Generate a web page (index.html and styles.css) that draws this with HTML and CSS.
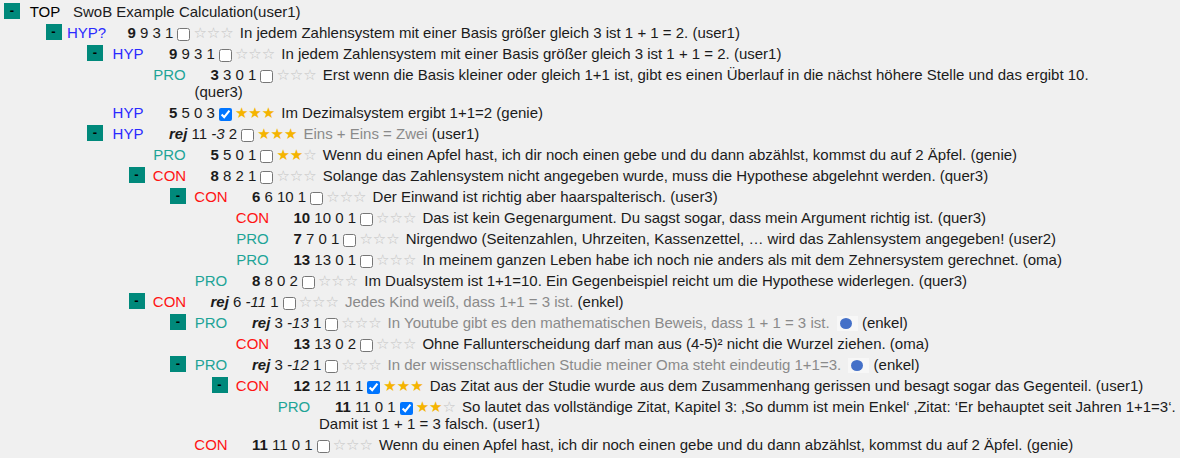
FILE: index.html
```html
<!DOCTYPE html>
<html lang="de">
<head>
<meta charset="utf-8">
<title>SwoB Example Calculation</title>
<link rel="stylesheet" href="styles.css">
</head>
<body>
<div class="tree">
  <div class="node">
    <div class="row">
      <button class="tog">-</button>
      <span class="lbl">TOP</span>
      <div class="txt txt-top">SwoB Example Calculation(user1)</div>
    </div>
    <div class="kids">
      <div class="node">
        <div class="row">
          <button class="tog">-</button>
          <span class="lbl hyp">HYP?</span>
          <div class="txt"><b>9</b> 9 3 1<input class="cb" type="checkbox"><span class="stars"><span class="off">☆☆☆</span></span>In jedem Zahlensystem mit einer Basis größer gleich 3 ist 1 + 1 = 2. (user1)</div>
        </div>
        <div class="kids">
          <div class="node">
            <div class="row">
              <button class="tog">-</button>
              <span class="lbl hyp">HYP</span>
              <div class="txt"><b>9</b> 9 3 1<input class="cb" type="checkbox"><span class="stars"><span class="off">☆☆☆</span></span>In jedem Zahlensystem mit einer Basis größer gleich 3 ist 1 + 1 = 2. (user1)</div>
            </div>
            <div class="kids">
              <div class="node">
                <div class="row">
                  <span class="tog-sp"></span>
                  <span class="lbl pro">PRO</span>
                  <div class="txt"><b>3</b> 3 0 1<input class="cb" type="checkbox"><span class="stars"><span class="off">☆☆☆</span></span>Erst wenn die Basis kleiner oder gleich 1+1 ist, gibt es einen Überlauf in die nächst höhere Stelle und das ergibt 10. (quer3)</div>
                </div>
              </div>
            </div>
          </div>
          <div class="node">
            <div class="row">
              <span class="tog-sp"></span>
              <span class="lbl hyp">HYP</span>
              <div class="txt"><b>5</b> 5 0 3<input class="cb" type="checkbox" checked><span class="stars"><span class="on">★★★</span></span>Im Dezimalsystem ergibt 1+1=2 (genie)</div>
            </div>
          </div>
          <div class="node">
            <div class="row">
              <button class="tog">-</button>
              <span class="lbl hyp">HYP</span>
              <div class="txt"><b><i>rej</i></b> 11 <i>-3</i> 2<input class="cb" type="checkbox"><span class="stars"><span class="on">★★★</span></span><span class="rej">Eins + Eins = Zwei</span> (user1)</div>
            </div>
            <div class="kids">
              <div class="node">
                <div class="row">
                  <span class="tog-sp"></span>
                  <span class="lbl pro">PRO</span>
                  <div class="txt"><b>5</b> 5 0 1<input class="cb" type="checkbox"><span class="stars"><span class="on">★★</span><span class="off">☆</span></span>Wenn du einen Apfel hast, ich dir noch einen gebe und du dann abzählst, kommst du auf 2 Äpfel. (genie)</div>
                </div>
              </div>
              <div class="node">
                <div class="row">
                  <button class="tog">-</button>
                  <span class="lbl con">CON</span>
                  <div class="txt"><b>8</b> 8 2 1<input class="cb" type="checkbox"><span class="stars"><span class="off">☆☆☆</span></span>Solange das Zahlensystem nicht angegeben wurde, muss die Hypothese abgelehnt werden. (quer3)</div>
                </div>
                <div class="kids">
                  <div class="node">
                    <div class="row">
                      <button class="tog">-</button>
                      <span class="lbl con">CON</span>
                      <div class="txt"><b>6</b> 6 10 1<input class="cb" type="checkbox"><span class="stars"><span class="off">☆☆☆</span></span>Der Einwand ist richtig aber haarspalterisch. (user3)</div>
                    </div>
                    <div class="kids">
                      <div class="node">
                        <div class="row">
                          <span class="tog-sp"></span>
                          <span class="lbl con">CON</span>
                          <div class="txt"><b>10</b> 10 0 1<input class="cb" type="checkbox"><span class="stars"><span class="off">☆☆☆</span></span>Das ist kein Gegenargument. Du sagst sogar, dass mein Argument richtig ist. (quer3)</div>
                        </div>
                      </div>
                      <div class="node">
                        <div class="row">
                          <span class="tog-sp"></span>
                          <span class="lbl pro">PRO</span>
                          <div class="txt"><b>7</b> 7 0 1<input class="cb" type="checkbox"><span class="stars"><span class="off">☆☆☆</span></span>Nirgendwo (Seitenzahlen, Uhrzeiten, Kassenzettel, … wird das Zahlensystem angegeben! (user2)</div>
                        </div>
                      </div>
                      <div class="node">
                        <div class="row">
                          <span class="tog-sp"></span>
                          <span class="lbl pro">PRO</span>
                          <div class="txt"><b>13</b> 13 0 1<input class="cb" type="checkbox"><span class="stars"><span class="off">☆☆☆</span></span>In meinem ganzen Leben habe ich noch nie anders als mit dem Zehnersystem gerechnet. (oma)</div>
                        </div>
                      </div>
                    </div>
                  </div>
                  <div class="node">
                    <div class="row">
                      <span class="tog-sp"></span>
                      <span class="lbl pro">PRO</span>
                      <div class="txt"><b>8</b> 8 0 2<input class="cb" type="checkbox"><span class="stars"><span class="off">☆☆☆</span></span>Im Dualsystem ist 1+1=10. Ein Gegenbeispiel reicht um die Hypothese widerlegen. (quer3)</div>
                    </div>
                  </div>
                </div>
              </div>
              <div class="node">
                <div class="row">
                  <button class="tog">-</button>
                  <span class="lbl con">CON</span>
                  <div class="txt"><b><i>rej</i></b> 6 <i>-11</i> 1<input class="cb" type="checkbox"><span class="stars"><span class="off">☆☆☆</span></span><span class="rej">Jedes Kind weiß, dass 1+1 = 3 ist.</span> (enkel)</div>
                </div>
                <div class="kids">
                  <div class="node">
                    <div class="row">
                      <button class="tog">-</button>
                      <span class="lbl pro">PRO</span>
                      <div class="txt"><b><i>rej</i></b> 3 <i>-13</i> 1<input class="cb" type="checkbox"><span class="stars"><span class="off">☆☆☆</span></span><span class="rej">In Youtube gibt es den mathematischen Beweis, dass 1 + 1 = 3 ist.</span> <span class="ref"><span class="dot"></span></span> (enkel)</div>
                    </div>
                    <div class="kids">
                      <div class="node">
                        <div class="row">
                          <span class="tog-sp"></span>
                          <span class="lbl con">CON</span>
                          <div class="txt"><b>13</b> 13 0 2<input class="cb" type="checkbox"><span class="stars"><span class="off">☆☆☆</span></span>Ohne Fallunterscheidung darf man aus (4-5)² nicht die Wurzel ziehen. (oma)</div>
                        </div>
                      </div>
                    </div>
                  </div>
                  <div class="node">
                    <div class="row">
                      <button class="tog">-</button>
                      <span class="lbl pro">PRO</span>
                      <div class="txt"><b><i>rej</i></b> 3 <i>-12</i> 1<input class="cb" type="checkbox"><span class="stars"><span class="off">☆☆☆</span></span><span class="rej">In der wissenschaftlichen Studie meiner Oma steht eindeutig 1+1=3.</span> <span class="ref"><span class="dot"></span></span> (enkel)</div>
                    </div>
                    <div class="kids">
                      <div class="node">
                        <div class="row">
                          <button class="tog">-</button>
                          <span class="lbl con">CON</span>
                          <div class="txt"><b>12</b> 12 11 1<input class="cb" type="checkbox" checked><span class="stars"><span class="on">★★★</span></span>Das Zitat aus der Studie wurde aus dem Zusammenhang gerissen und besagt sogar das Gegenteil. (user1)</div>
                        </div>
                        <div class="kids">
                          <div class="node">
                            <div class="row">
                              <span class="tog-sp"></span>
                              <span class="lbl pro">PRO</span>
                              <div class="txt"><b>11</b> 11 0 1<input class="cb" type="checkbox" checked><span class="stars"><span class="on">★★</span><span class="off">☆</span></span>So lautet das vollständige Zitat, Kapitel 3: ‚So dumm ist mein Enkel‘ ‚Zitat: ‘Er behauptet seit Jahren 1+1=3‘. Damit ist 1 + 1 = 3 falsch. (user1)</div>
                            </div>
                          </div>
                        </div>
                      </div>
                    </div>
                  </div>
                  <div class="node">
                    <div class="row">
                      <span class="tog-sp"></span>
                      <span class="lbl con">CON</span>
                      <div class="txt"><b>11</b> 11 0 1<input class="cb" type="checkbox"><span class="stars"><span class="off">☆☆☆</span></span>Wenn du einen Apfel hast, ich dir noch einen gebe und du dann abzählst, kommst du auf 2 Äpfel. (genie)</div>
                    </div>
                  </div>
                </div>
              </div>
            </div>
          </div>
        </div>
      </div>
    </div>
  </div>
</div>
</body>
</html>
```

FILE: styles.css
```css
html, body {
  margin: 0;
  padding: 0;
  background: #f0f0f0;
  overflow: hidden;
}

body {
  font-family: "Liberation Sans", Arial, sans-serif;
  font-size: 15px;
  line-height: 17px;
  color: #1b1b1b;
}

.tree {
  width: 976px;
  padding: 1px 0 0 4px;
}

.kids {
  margin-left: 41.5px;
  margin-right: -38px;
}

.row {
  display: flex;
  align-items: flex-start;
  padding: 2px 0;
}

.tog {
  flex: none;
  width: 16px;
  height: 16px;
  margin: 0;
  padding: 0;
  border: 0;
  border-radius: 0;
  background: #00897b;
  color: #000;
  font-family: "Liberation Sans", Arial, sans-serif;
  font-weight: bold;
  font-size: 13px;
  line-height: 16px;
  text-align: center;
  cursor: pointer;
}

.tog-sp {
  flex: none;
  width: 16px;
  height: 16px;
}

.lbl {
  flex: none;
  width: 50px;
  text-align: center;
  color: #000;
}

.hyp { color: #2a2aff; }
.pro { color: #1ea497; }
.con { color: #ff1414; }

.txt {
  flex: 1;
  min-width: 0;
  text-indent: 16px;
}

.txt-top {
  text-indent: 3px;
}

.cb {
  width: 13px;
  height: 13px;
  margin: 0 3px 0 4px;
  vertical-align: middle;
}

.stars {
  font-family: "DejaVu Sans", sans-serif;
  font-size: 15px;
  line-height: 1;
  margin-right: 6px;
}

.stars .on { color: #f5b400; }
.stars .off { color: #c4c4c4; }

.rej { color: #8a8a8a; }

.ref {
  display: inline-block;
  width: 21px;
  height: 15px;
  box-sizing: border-box;
  padding: 2px 0 0 3px;
  margin-left: 3px;
  background: #f7f7f7;
  vertical-align: -3px;
  line-height: 0;
}

.dot {
  display: block;
  width: 12px;
  height: 11px;
  border-radius: 50%;
  background: #4470c8;
}
```
